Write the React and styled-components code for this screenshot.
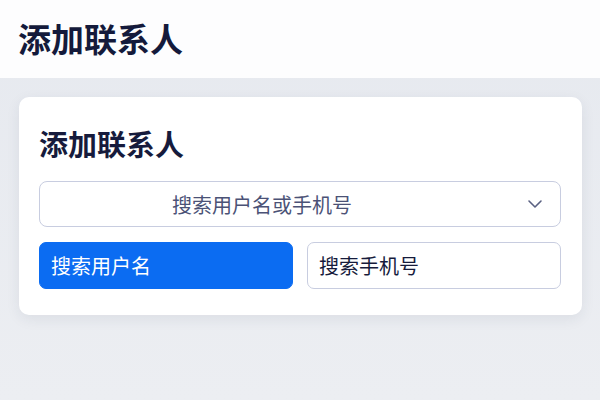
import styled, { createGlobalStyle } from "styled-components";

const GlobalStyle = createGlobalStyle`
  html, body {
    margin: 0;
    padding: 0;
    background: #e9ecf1;
    font-family: "Noto Sans CJK SC", "Noto Sans", sans-serif;
  }
`;

const Page = styled.div`
  width: 600px;
  height: 400px;
  display: flex;
  flex-direction: column;
  background: linear-gradient(180deg, #e6e9ef 0%, #eceef2 100%);
`;

const Header = styled.header`
  height: 78px;
  background: #fdfdfe;
  display: flex;
  align-items: center;
  padding-left: 18px;
  box-sizing: border-box;
`;

const PageTitle = styled.h1`
  margin: 0;
  font-size: 33px;
  font-weight: 700;
  color: #141a3b;
  line-height: 1;
  padding-bottom: 1px;
`;

const Main = styled.main`
  padding: 19px 18px 0 19px;
`;

const Card = styled.section`
  background: #ffffff;
  border-radius: 10px;
  box-shadow: 0 4px 14px rgba(40, 50, 80, 0.08);
  padding: 28px 21px 26px 20px;
  display: flex;
  flex-direction: column;
`;

const CardTitle = styled.h2`
  margin: 0 0 20px 0;
  font-size: 29px;
  font-weight: 700;
  color: #161b3c;
  line-height: 36px;
`;

const Select = styled.div`
  height: 46px;
  box-sizing: border-box;
  border: 1px solid #c8cde0;
  border-radius: 8px;
  display: flex;
  align-items: center;
  padding: 0 17px 0 132px;
  color: #4b5276;
  font-size: 20px;
`;

const SelectText = styled.span`
  flex: 1;
`;

const Chevron = styled.svg`
  width: 16px;
  height: 10px;
  flex-shrink: 0;
`;

const ButtonRow = styled.div`
  margin-top: 15px;
  display: grid;
  grid-template-columns: 1fr 1fr;
  gap: 14px;
`;

const TabButton = styled.button`
  height: 47px;
  box-sizing: border-box;
  border-radius: 7px;
  border: 1px solid ${(p) => (p.$active ? "#0b6cf2" : "#c8cde0")};
  background: ${(p) => (p.$active ? "#0b6cf2" : "#ffffff")};
  color: ${(p) => (p.$active ? "#ffffff" : "#161b3c")};
  font-family: inherit;
  font-size: 20px;
  text-align: left;
  padding: 0 11px;
  cursor: pointer;
`;

const App = () => {
  return (
    <>
      <GlobalStyle />
      <Page>
        <Header>
          <PageTitle>添加联系人</PageTitle>
        </Header>
        <Main>
          <Card>
            <CardTitle>添加联系人</CardTitle>
            <Select>
              <SelectText>搜索用户名或手机号</SelectText>
              <Chevron viewBox="0 0 16 10">
                <path d="M2 2 L8 8 L14 2" fill="none" stroke="#5a6182" strokeWidth="1.6" strokeLinecap="round" strokeLinejoin="round" />
              </Chevron>
            </Select>
            <ButtonRow>
              <TabButton $active>搜索用户名</TabButton>
              <TabButton>搜索手机号</TabButton>
            </ButtonRow>
          </Card>
        </Main>
      </Page>
    </>
  );
};

export default App;
